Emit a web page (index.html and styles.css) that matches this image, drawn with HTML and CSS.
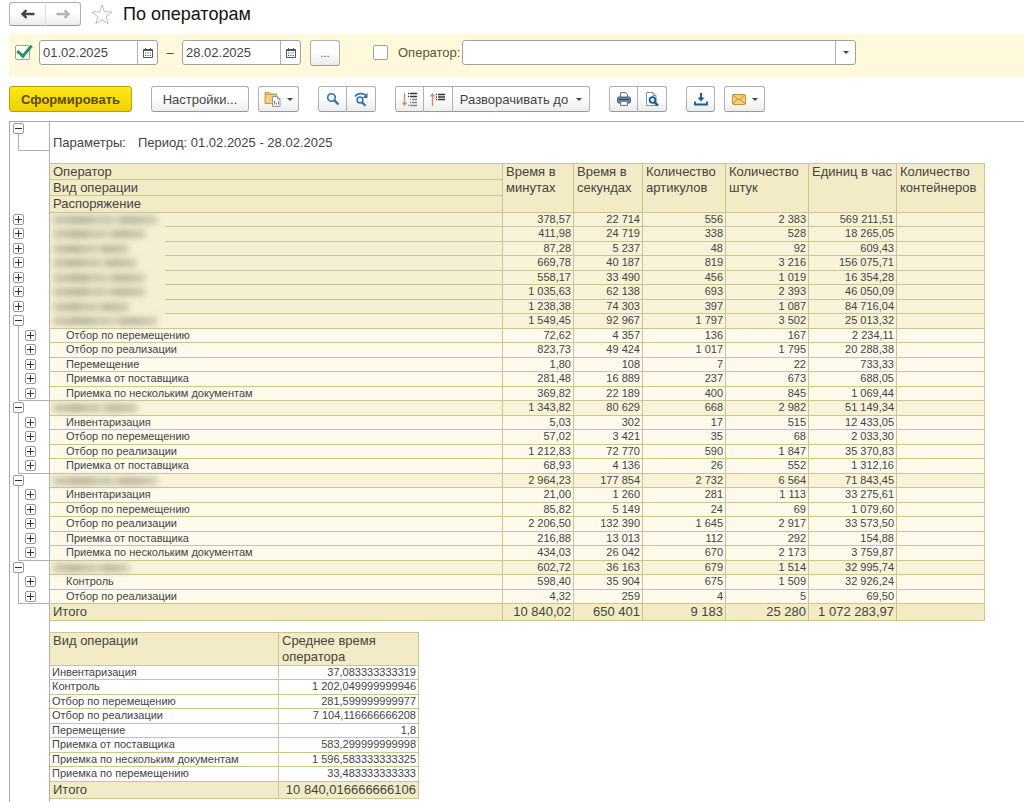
FILE: index.html
```html
<!DOCTYPE html>
<html lang="ru">

<head>
  <meta charset="UTF-8">
  <meta name="viewport" content="width=device-width, initial-scale=1.0">
  <title>По операторам</title>
  <link rel="stylesheet" href="styles.css">
</head>

<body>

  <header class="title-bar">
    <div class="group nav">
      <button type="button" class="btn" aria-label="Назад">
        <svg width="14" height="10" viewBox="0 0 14 10"><path d="M13.5 5H3M5.5 1.2L1.5 5l4 3.8" fill="none" stroke="#444" stroke-width="2.400"/></svg>
      </button>
      <button type="button" class="btn" aria-label="Вперед">
        <svg width="14" height="10" viewBox="0 0 14 10"><path d="M.5 5H11M8.5 1.2l4 3.8-4 3.8" fill="none" stroke="#b4b4b4" stroke-width="2.400"/></svg>
      </button>
    </div>
    <svg class="star" width="22" height="21" viewBox="0 0 22 21"><path d="M11 1l2.500 6.800 7.500.2-5.900 4.600 2.100 7.200L11 15.600l-6.200 4.200 2.100-7.200L1 8l7.500-.2z" fill="#fff" stroke="#bbb"/></svg>
    <h1>По операторам</h1>
  </header>

  <form class="filters">
    <input type="checkbox" class="check" aria-label="Период" checked>
    <div class="field date">
      <input type="text" value="01.02.2025" aria-label="Начало периода">
      <button type="button" aria-label="Выбрать дату начала">
        <svg width="10" height="10" viewBox="0 0 10 10"><path d="M.5 1.500h9v8h-9zM0 2.500h10M2.500 0v2M7.500 0v2" fill="none" stroke="#555"/><path d="M2 5h6M2 7.500h6" stroke="#555" stroke-width="1.200" stroke-dasharray="1.200 1.200"/></svg>
      </button>
    </div>
    <span class="dash">–</span>
    <div class="field date">
      <input type="text" value="28.02.2025" aria-label="Конец периода">
      <button type="button" aria-label="Выбрать дату окончания">
        <svg width="10" height="10" viewBox="0 0 10 10"><path d="M.5 1.500h9v8h-9zM0 2.500h10M2.500 0v2M7.500 0v2" fill="none" stroke="#555"/><path d="M2 5h6M2 7.500h6" stroke="#555" stroke-width="1.200" stroke-dasharray="1.200 1.200"/></svg>
      </button>
    </div>
    <button type="button" class="btn more">...</button>
    <input type="checkbox" class="check operator-check" id="useOperator">
    <label for="useOperator">Оператор:</label>
    <div class="field operator">
      <input type="text" aria-label="Оператор">
      <button type="button" aria-label="Выбрать оператора"><span class="caret"></span></button>
    </div>
  </form>

  <div class="toolbar">
    <button type="button" class="btn primary">Сформировать</button>
    <button type="button" class="btn settings">Настройки...</button>
    <button type="button" class="btn menu" aria-label="Варианты отчета">
      <svg width="17" height="16" viewBox="0 0 17 16"><path d="M1 3.500V1.500h4.500L7 3h5.500v2" fill="#f3c96b" stroke="#c99a48"/><path d="M1 3.500h11.500V12.500H1z" fill="#f5cf7c" stroke="#c99a48"/><path d="M8.500 5.500h5l2.500 2.500v7.500H8.500z" fill="#fff" stroke="#8b98a5"/><path d="M13.500 5.500V8H16" fill="none" stroke="#8b98a5"/><path d="M10.500 13.500V10M12.500 13.500v-2" stroke="#d0604c"/><path d="M14.500 13.500v-3" stroke="#4c9a6c"/></svg>
      <span class="caret"></span>
    </button>
    <div class="group search">
      <button type="button" class="btn" aria-label="Найти">
        <svg width="14" height="14" viewBox="0 0 14 14"><circle cx="5.500" cy="5.500" r="3.800" fill="#eef5fa" stroke="#2f74a8" stroke-width="1.600"/><path d="M8.500 8.500l4 4" stroke="#2f74a8" stroke-width="2.400"/></svg>
      </button>
      <button type="button" class="btn" aria-label="Найти далее">
        <svg width="15" height="15" viewBox="0 0 15 15"><path d="M1 4.500C3 1 8.500.8 11.500 3" fill="none" stroke="#2f74a8" stroke-width="1.800"/><path d="M13.500.800v5.200H8.700z" fill="#2f74a8"/><circle cx="6" cy="8" r="2.900" fill="#eef5fa" stroke="#2f74a8" stroke-width="1.500"/><path d="M8 10.200l3.500 3.500" stroke="#2f74a8" stroke-width="2.200"/></svg>
      </button>
    </div>
    <div class="group expand">
      <button type="button" class="btn" aria-label="Развернуть группы">
        <svg width="16" height="15" viewBox="0 0 16 15"><path d="M2.500 1v12M.5 10.500l2 2.500 2-2.500" fill="none" stroke="#e8805f" stroke-width="1.300"/><path d="M6 1.500h1M8 1.500h7M6 4.500h1M8 4.500h7" stroke="#333" stroke-width="1.300"/><path d="M8 7.500h1M10 7.500h5M8 10.500h1M10 10.500h5M6 13.500h1M8 13.500h7" stroke="#888" stroke-width="1.300"/></svg>
      </button>
      <button type="button" class="btn" aria-label="Свернуть группы">
        <svg width="16" height="15" viewBox="0 0 16 15"><path d="M2.500 14V2M.5 4.500l2-2.500 2 2.500" fill="none" stroke="#e8805f" stroke-width="1.300"/><path d="M6 2.500h1M8 2.500h7M6 5h1M8 5h7M6 7.500h1M8 7.500h7" stroke="#333" stroke-width="1.300"/></svg>
      </button>
      <button type="button" class="btn expand-to">Разворачивать до <span class="caret"></span></button>
    </div>
    <div class="group print">
      <button type="button" class="btn" aria-label="Печать">
        <svg width="14" height="14" viewBox="0 0 14 14"><path d="M3.500 6V.5h5l2 2V6" fill="#fff" stroke="#60788c"/><rect x=".5" y="5" width="13" height="6" rx="1.500" fill="#6d8bad" stroke="#3b5674"/><path d="M2 7.500h10" stroke="#2b4058"/><path d="M3.500 9.500h7v4h-7z" fill="#fff" stroke="#60788c"/></svg>
      </button>
      <button type="button" class="btn" aria-label="Просмотр">
        <svg width="14" height="15" viewBox="0 0 14 15"><path d="M1.500.5h6.500l3 3v10H1.500z" fill="#fff" stroke="#8592a0"/><path d="M8 .5v3h3" fill="none" stroke="#8592a0"/><circle cx="7.500" cy="8" r="2.900" fill="#dcebf5" stroke="#1d5b8a" stroke-width="1.800"/><path d="M9.500 10.200l3.500 3.500" stroke="#1d5b8a" stroke-width="2.400"/></svg>
      </button>
    </div>
    <button type="button" class="btn save" aria-label="Сохранить">
      <svg width="14" height="13" viewBox="0 0 14 13"><path d="M7 0v7" stroke="#1d5b8a" stroke-width="2"/><path d="M3.500 4.500h7L7 8.500z" fill="#1d5b8a"/><path d="M1 8.500v3h12v-3" fill="none" stroke="#1d5b8a" stroke-width="1.800"/></svg>
    </button>
    <button type="button" class="btn menu mail" aria-label="Отправить">
      <svg width="14" height="11" viewBox="0 0 14 11"><rect x=".5" y=".5" width="13" height="10" rx="1" fill="#f7cf78" stroke="#c98f35"/><path d="M1 1l6 5 6-5M1 10l4.500-5M13 10L8.500 5" fill="none" stroke="#c98f35"/></svg>
      <span class="caret"></span>
    </button>
  </div>

  <main class="report">
    <div class="params">
      <div class="bracket"><button type="button" class="toggle" aria-expanded="true" aria-label="Свернуть"></button></div>
      <span>Параметры:</span>
      <span>Период: 01.02.2025 - 28.02.2025</span>
    </div>

    <table class="sheet operators">
      <colgroup>
        <col class="c-tree"><col class="c-name"><col class="c-min"><col class="c-sec"><col class="c-art"><col class="c-qty"><col class="c-rate"><col class="c-box">
      </colgroup>
      <thead>
        <tr><td class="tree" rowspan="3"></td><th>Оператор</th><th rowspan="3">Время в минутах</th><th rowspan="3">Время в секундах</th><th rowspan="3">Количество артикулов</th><th rowspan="3">Количество штук</th><th rowspan="3">Единиц в час</th><th rowspan="3">Количество контейнеров</th></tr>
        <tr><th>Вид операции</th></tr>
        <tr><th>Распоряжение</th></tr>
      </thead>
      <tbody>
        <tr class="op"><td class="tree"><button type="button" class="toggle" aria-expanded="false" aria-label="Развернуть"></button></td><td class="masked"><span class="blur w-104"></span></td><td>378,57</td><td>22 714</td><td>556</td><td>2 383</td><td>569 211,51</td><td></td></tr>
        <tr class="op"><td class="tree"><button type="button" class="toggle" aria-expanded="false" aria-label="Развернуть"></button></td><td class="masked"><span class="blur w-92"></span></td><td>411,98</td><td>24 719</td><td>338</td><td>528</td><td>18 265,05</td><td></td></tr>
        <tr class="op"><td class="tree"><button type="button" class="toggle" aria-expanded="false" aria-label="Развернуть"></button></td><td class="masked"><span class="blur w-76"></span></td><td>87,28</td><td>5 237</td><td>48</td><td>92</td><td>609,43</td><td></td></tr>
        <tr class="op"><td class="tree"><button type="button" class="toggle" aria-expanded="false" aria-label="Развернуть"></button></td><td class="masked"><span class="blur w-84"></span></td><td>669,78</td><td>40 187</td><td>819</td><td>3 216</td><td>156 075,71</td><td></td></tr>
        <tr class="op"><td class="tree"><button type="button" class="toggle" aria-expanded="false" aria-label="Развернуть"></button></td><td class="masked"><span class="blur w-92"></span></td><td>558,17</td><td>33 490</td><td>456</td><td>1 019</td><td>16 354,28</td><td></td></tr>
        <tr class="op"><td class="tree"><button type="button" class="toggle" aria-expanded="false" aria-label="Развернуть"></button></td><td class="masked"><span class="blur w-92"></span></td><td>1 035,63</td><td>62 138</td><td>693</td><td>2 393</td><td>46 050,09</td><td></td></tr>
        <tr class="op"><td class="tree"><button type="button" class="toggle" aria-expanded="false" aria-label="Развернуть"></button></td><td class="masked"><span class="blur w-76"></span></td><td>1 238,38</td><td>74 303</td><td>397</td><td>1 087</td><td>84 716,04</td><td></td></tr>
        <tr class="op"><td class="tree open"><button type="button" class="toggle" aria-expanded="true" aria-label="Свернуть"></button></td><td><span class="blur w-104"></span></td><td>1 549,45</td><td>92 967</td><td>1 797</td><td>3 502</td><td>25 013,32</td><td></td></tr>
        <tr><td class="tree child"><button type="button" class="toggle" aria-expanded="false" aria-label="Развернуть"></button></td><td>Отбор по перемещению</td><td>72,62</td><td>4 357</td><td>136</td><td>167</td><td>2 234,11</td><td></td></tr>
        <tr><td class="tree child"><button type="button" class="toggle" aria-expanded="false" aria-label="Развернуть"></button></td><td>Отбор по реализации</td><td>823,73</td><td>49 424</td><td>1 017</td><td>1 795</td><td>20 288,38</td><td></td></tr>
        <tr><td class="tree child"><button type="button" class="toggle" aria-expanded="false" aria-label="Развернуть"></button></td><td>Перемещение</td><td>1,80</td><td>108</td><td>7</td><td>22</td><td>733,33</td><td></td></tr>
        <tr><td class="tree child"><button type="button" class="toggle" aria-expanded="false" aria-label="Развернуть"></button></td><td>Приемка от поставщика</td><td>281,48</td><td>16 889</td><td>237</td><td>673</td><td>688,05</td><td></td></tr>
        <tr><td class="tree child last"><button type="button" class="toggle" aria-expanded="false" aria-label="Развернуть"></button></td><td>Приемка по нескольким документам</td><td>369,82</td><td>22 189</td><td>400</td><td>845</td><td>1 069,44</td><td></td></tr>
        <tr class="op"><td class="tree open"><button type="button" class="toggle" aria-expanded="true" aria-label="Свернуть"></button></td><td><span class="blur w-84"></span></td><td>1 343,82</td><td>80 629</td><td>668</td><td>2 982</td><td>51 149,34</td><td></td></tr>
        <tr><td class="tree child"><button type="button" class="toggle" aria-expanded="false" aria-label="Развернуть"></button></td><td>Инвентаризация</td><td>5,03</td><td>302</td><td>17</td><td>515</td><td>12 433,05</td><td></td></tr>
        <tr><td class="tree child"><button type="button" class="toggle" aria-expanded="false" aria-label="Развернуть"></button></td><td>Отбор по перемещению</td><td>57,02</td><td>3 421</td><td>35</td><td>68</td><td>2 033,30</td><td></td></tr>
        <tr><td class="tree child"><button type="button" class="toggle" aria-expanded="false" aria-label="Развернуть"></button></td><td>Отбор по реализации</td><td>1 212,83</td><td>72 770</td><td>590</td><td>1 847</td><td>35 370,83</td><td></td></tr>
        <tr><td class="tree child last"><button type="button" class="toggle" aria-expanded="false" aria-label="Развернуть"></button></td><td>Приемка от поставщика</td><td>68,93</td><td>4 136</td><td>26</td><td>552</td><td>1 312,16</td><td></td></tr>
        <tr class="op"><td class="tree open"><button type="button" class="toggle" aria-expanded="true" aria-label="Свернуть"></button></td><td><span class="blur w-104"></span></td><td>2 964,23</td><td>177 854</td><td>2 732</td><td>6 564</td><td>71 843,45</td><td></td></tr>
        <tr><td class="tree child"><button type="button" class="toggle" aria-expanded="false" aria-label="Развернуть"></button></td><td>Инвентаризация</td><td>21,00</td><td>1 260</td><td>281</td><td>1 113</td><td>33 275,61</td><td></td></tr>
        <tr><td class="tree child"><button type="button" class="toggle" aria-expanded="false" aria-label="Развернуть"></button></td><td>Отбор по перемещению</td><td>85,82</td><td>5 149</td><td>24</td><td>69</td><td>1 079,60</td><td></td></tr>
        <tr><td class="tree child"><button type="button" class="toggle" aria-expanded="false" aria-label="Развернуть"></button></td><td>Отбор по реализации</td><td>2 206,50</td><td>132 390</td><td>1 645</td><td>2 917</td><td>33 573,50</td><td></td></tr>
        <tr><td class="tree child"><button type="button" class="toggle" aria-expanded="false" aria-label="Развернуть"></button></td><td>Приемка от поставщика</td><td>216,88</td><td>13 013</td><td>112</td><td>292</td><td>154,88</td><td></td></tr>
        <tr><td class="tree child last"><button type="button" class="toggle" aria-expanded="false" aria-label="Развернуть"></button></td><td>Приемка по нескольким документам</td><td>434,03</td><td>26 042</td><td>670</td><td>2 173</td><td>3 759,87</td><td></td></tr>
        <tr class="op"><td class="tree open"><button type="button" class="toggle" aria-expanded="true" aria-label="Свернуть"></button></td><td><span class="blur w-76"></span></td><td>602,72</td><td>36 163</td><td>679</td><td>1 514</td><td>32 995,74</td><td></td></tr>
        <tr><td class="tree child"><button type="button" class="toggle" aria-expanded="false" aria-label="Развернуть"></button></td><td>Контроль</td><td>598,40</td><td>35 904</td><td>675</td><td>1 509</td><td>32 926,24</td><td></td></tr>
        <tr><td class="tree child last"><button type="button" class="toggle" aria-expanded="false" aria-label="Развернуть"></button></td><td>Отбор по реализации</td><td>4,32</td><td>259</td><td>4</td><td>5</td><td>69,50</td><td></td></tr>
      </tbody>
      <tfoot>
        <tr><td class="tree"></td><td>Итого</td><td>10 840,02</td><td>650 401</td><td>9 183</td><td>25 280</td><td>1 072 283,97</td><td></td></tr>
      </tfoot>
    </table>

    <table class="sheet averages">
      <colgroup><col class="c-kind"><col class="c-avg"></colgroup>
      <thead>
        <tr><th>Вид операции</th><th>Среднее время оператора</th></tr>
      </thead>
      <tbody>
        <tr><td>Инвентаризация</td><td>37,083333333319</td></tr>
        <tr><td>Контроль</td><td>1 202,049999999946</td></tr>
        <tr><td>Отбор по перемещению</td><td>281,599999999977</td></tr>
        <tr><td>Отбор по реализации</td><td>7 104,116666666208</td></tr>
        <tr><td>Перемещение</td><td>1,8</td></tr>
        <tr><td>Приемка от поставщика</td><td>583,299999999998</td></tr>
        <tr><td>Приемка по нескольким документам</td><td>1 596,583333333325</td></tr>
        <tr><td>Приемка по перемещению</td><td>33,483333333333</td></tr>
      </tbody>
      <tfoot>
        <tr><td>Итого</td><td>10 840,016666666106</td></tr>
      </tfoot>
    </table>
  </main>

</body>
</html>
```
FILE: styles.css
```css
* {
  box-sizing: border-box;
}

body {
  display: flex;
  flex-direction: column;
  min-height: 100vh;
  margin: 0;
  padding-left: 9px;
  background-color: #fff;
  color: #444;
  font-family: "Liberation Sans", Arial, sans-serif;
  font-size: 13px;
}

button,
input {
  font: inherit;
  color: inherit;
}

svg {
  display: block;
  flex: none;
}

/* buttons */

.btn {
  display: flex;
  align-items: center;
  justify-content: center;
  height: 26px;
  padding: 0;
  border: 1px solid #b0b0b0;
  border-bottom-color: #999;
  border-radius: 3px;
  background: linear-gradient(#fff 40%, #ececec);
  cursor: pointer;
}

.group {
  display: flex;
}

.group .btn {
  width: 29px;
  border-radius: 0;
}

.group .btn + .btn {
  border-left: none;
}

.group .btn:first-child {
  border-radius: 3px 0 0 3px;
}

.group .btn:last-child {
  border-radius: 0 3px 3px 0;
}

.caret {
  border: 3px solid transparent;
  border-top-color: #444;
  border-bottom: none;
}

/* title */

.title-bar {
  display: flex;
  align-items: center;
  height: 34px;
  padding-bottom: 6px;
}

.nav .btn {
  width: 36px;
  height: 24px;
}

.nav .btn:first-child {
  border-right: none;
}

.nav .btn + .btn {
  border-left: 1px solid #ddd;
}

.star {
  margin: 0 10px;
}

h1 {
  margin: 0;
  color: #111;
  font-size: 18px;
  font-weight: normal;
}

/* filters */

.filters {
  display: flex;
  align-items: flex-start;
  height: 43px;
  padding: 6px 6px 0;
  background-color: #fff9dc;
  line-height: 25px;
}

.check {
  appearance: none;
  width: 15px;
  height: 15px;
  margin: 5px 9px 0 0;
  border: 1px solid #a0a0a0;
  border-radius: 2px;
  background-color: #fff;
}

.check:checked::before {
  content: "";
  display: block;
  width: 6px;
  height: 12px;
  margin: -4px 0 0 4px;
  border: solid #1f9a55;
  border-width: 0 3px 3px 0;
  transform: rotate(40deg);
}

.field {
  display: flex;
  height: 25px;
  border: 1px solid #a0a0a0;
  border-radius: 3px;
  background-color: #fff;
}

.field input {
  flex: 1;
  min-width: 0;
  padding: 0 3px;
  border: none;
  background: none;
  outline: none;
}

.field button {
  display: flex;
  align-items: center;
  justify-content: center;
  width: 20px;
  padding: 0;
  border: none;
  border-left: 1px solid #b0b0b0;
  background: none;
}

.date {
  width: 119px;
}

.dash {
  width: 24px;
  text-align: center;
}

.more {
  width: 30px;
  margin-left: 9px;
  font-size: 11px;
}

.operator-check {
  margin-left: 33px;
}

.filters label {
  margin: 0 2px 0 1px;
  color: #5a5640;
}

.operator {
  flex: 0 1 394px;
}

/* toolbar */

.toolbar {
  display: flex;
  flex-wrap: wrap;
  padding: 9px 0;
}

.primary {
  width: 123px;
  border-color: #b8a000;
  background: linear-gradient(#ffe71a, #f0d000);
  color: #574c10;
  font-weight: bold;
}

.settings {
  width: 98px;
  margin-left: 19px;
}

.menu {
  gap: 6px;
  width: 41px;
  margin-left: 9px;
}

.search,
.expand,
.print,
.save {
  margin-left: 19px;
}

.group .expand-to {
  gap: 8px;
  width: 137px;
}

.save {
  width: 29px;
}

/* report sheet */

.report {
  flex: 1;
  padding-bottom: 3px;
  border: solid #a8a8a8;
  border-width: 1px 0 0 1px;
  background: linear-gradient(#b0b0b0, #b0b0b0) 39px 0 / 1px 100% no-repeat;
}

.params {
  display: flex;
  height: 41px;
  line-height: 41px;
}

.params span {
  margin: 0 9px 0 3px;
}

.bracket {
  width: 40px;
  height: 29px;
  padding-top: 1px;
  background:
    linear-gradient(#b0b0b0, #b0b0b0) 8px 12px / 1px 17px no-repeat,
    linear-gradient(#b0b0b0, #b0b0b0) 8px 28px / 31px 1px no-repeat;
}

.toggle {
  display: block;
  width: 11px;
  height: 11px;
  margin-left: 3px;
  padding: 0;
  border: 1px solid #999;
  border-radius: 2px;
  background: linear-gradient(#333, #333) center / 7px 1px no-repeat, #fff;
}

.toggle[aria-expanded="false"] {
  background:
    linear-gradient(#333, #333) center / 7px 1px no-repeat,
    linear-gradient(#333, #333) center / 1px 7px no-repeat,
    #fff;
}

.sheet {
  table-layout: fixed;
  border-collapse: separate;
  border-spacing: 0;
}

.sheet th,
.sheet td {
  padding: 0 2px;
  border: solid #ccc58e;
  border-width: 0 1px 1px 0;
  text-align: right;
  vertical-align: top;
  white-space: nowrap;
}

.sheet th {
  padding-left: 3px;
  background-color: #f3ebc6;
  font-weight: normal;
  line-height: 16px;
  text-align: left;
  white-space: normal;
}

.sheet thead tr:first-child th {
  border-top-width: 1px;
}

.sheet tbody tr {
  height: 14px;
  font-size: 11px;
  line-height: 13px;
}

.sheet tbody tr:nth-child(even) {
  height: 15px;
}

.sheet tfoot td {
  background-color: #f3ebc6;
  line-height: 16px;
}

.operators {
  width: 975px;
}

.operators thead tr:nth-child(2) th,
.operators thead tr:first-child th:nth-child(2) {
  line-height: 15px;
}

.operators tbody td {
  background-color: #fdfaec;
}

.operators .op td {
  background-color: #f8f2d9;
}

.operators td:nth-child(2) {
  padding-left: 16px;
  text-align: left;
}

.operators tfoot td:nth-child(2) {
  padding-left: 3px;
}

.operators .op td:nth-child(2) {
  padding-left: 3px;
}

/* names are hidden, the row line starts after them */

.operators .op .masked {
  border-bottom-color: transparent;
  background:
    linear-gradient(#ccc58e, #ccc58e) 115px 100% / 100% 1px no-repeat border-box,
    #f5f0d4;
}

.blur {
  display: block;
  height: 8px;
  margin-top: 3px;
  border-radius: 3px;
  background: linear-gradient(90deg, #c3bfa5 0 12%, #b5b198 20% 34%, #c6c2a8 42% 55%, #dcd8bd 60%, #b8b49b 66% 80%, #c6c2a8 90%);
  filter: blur(3px);
}

.w-76 {
  width: 76px;
}

.w-84 {
  width: 84px;
}

.w-92 {
  width: 92px;
}

.w-104 {
  width: 104px;
}

/* group tree to the left of the rows */

.operators tr .tree,
.operators .op .tree {
  padding: 1px 0 0;
  border: none;
  background: none;
  vertical-align: top;
}

.operators .op .tree.open {
  background: linear-gradient(#b0b0b0, #b0b0b0) 8px 12px / 1px 100% no-repeat;
}

.operators tr .tree.child {
  background: linear-gradient(#b0b0b0, #b0b0b0) 8px 0 / 1px 100% no-repeat;
}

.operators tr .tree.last {
  background:
    linear-gradient(#b0b0b0, #b0b0b0) 8px 0 / 1px 100% no-repeat,
    linear-gradient(#b0b0b0, #b0b0b0) 8px 100% / 32px 1px no-repeat;
}

.child .toggle {
  margin-left: 15px;
}

.c-tree {
  width: 40px;
}

.c-name {
  width: 453px;
}

.c-min {
  width: 71px;
}

.c-sec {
  width: 69px;
}

.c-art,
.c-qty {
  width: 83px;
}

.c-rate,
.c-box {
  width: 88px;
}

.averages {
  width: 369px;
  margin: 11px 0 0 40px;
}

.averages td:first-child {
  text-align: left;
}

.averages tfoot td:first-child {
  padding-left: 3px;
}

.c-kind {
  width: 229px;
}

.c-avg {
  width: 140px;
}
```
